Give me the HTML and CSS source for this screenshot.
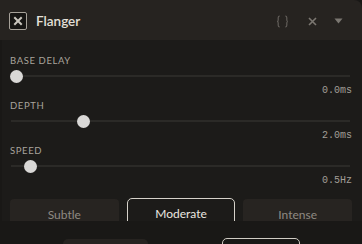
FILE: index.html
```html
<!DOCTYPE html>
<html>
<head>
<meta charset="utf-8">
<link rel="stylesheet" href="styles.css">
</head>
<body>
<div class="panel">
  <div class="header">
    <div class="close-btn">
      <svg width="10" height="10" viewBox="0 0 10 10"><path d="M2 2 L8 8 M8 2 L2 8" stroke="#c9c5bd" stroke-width="2" stroke-linecap="square"/></svg>
    </div>
    <div class="title">Flanger</div>
    <div class="spacer"></div>
    <svg class="ico braces" width="13" height="13" viewBox="0 0 13 13"><path d="M3.8 1 Q2.2 1 2.2 2.8 L2.2 5 Q2.2 6.5 1 6.5 Q2.2 6.5 2.2 8 L2.2 10.2 Q2.2 12 3.8 12 M9.2 1 Q10.8 1 10.8 2.8 L10.8 5 Q10.8 6.5 12 6.5 Q10.8 6.5 10.8 8 L10.8 10.2 Q10.8 12 9.2 12" stroke="#625e59" stroke-width="1.2" fill="none"/></svg>
    <svg class="ico x" width="9" height="9" viewBox="0 0 9 9"><path d="M1 1 L8 8 M8 1 L1 8" stroke="#7b7771" stroke-width="1.6"/></svg>
    <svg class="ico tri" width="9" height="6" viewBox="0 0 9 6"><path d="M0.5 0.5 L8.5 0.5 L4.5 5.5 Z" fill="#7b7771"/></svg>
  </div>
  <div class="content">
    <div class="param">
      <div class="label">BASE DELAY</div>
      <div class="slider"><div class="track"></div><div class="thumb" style="left:0%"></div></div>
      <div class="value">0.0ms</div>
    </div>
    <div class="param">
      <div class="label">DEPTH</div>
      <div class="slider"><div class="track"></div><div class="thumb" style="left:19.6%"></div></div>
      <div class="value">2.0ms</div>
    </div>
    <div class="param">
      <div class="label">SPEED</div>
      <div class="slider"><div class="track"></div><div class="thumb" style="left:4.1%"></div></div>
      <div class="value">0.5Hz</div>
    </div>
    <div class="presets">
      <div class="preset">Subtle</div>
      <div class="preset active">Moderate</div>
      <div class="preset">Intense</div>
    </div>
  </div>
</div>
<div class="footer">
  <div class="fbtn dark"></div>
  <div class="fbtn outline"></div>
</div>
</body>
</html>
```
FILE: styles.css
```css
html, body {
  margin: 0;
  padding: 0;
}
body {
  width: 362px;
  height: 244px;
  overflow: hidden;
  background: #191816;
  font-family: Lato, "Noto Sans", sans-serif;
}
.panel {
  display: flex;
  flex-direction: column;
}
.header {
  height: 40px;
  background: #262320;
  border-top-right-radius: 8px;
  display: flex;
  align-items: center;
  padding: 0 19px 0 9px;
  box-sizing: border-box;
}
.close-btn {
  width: 18px;
  height: 18px;
  box-sizing: border-box;
  border: 1px solid #a6a199;
  border-radius: 2px;
  background: #161513;
  display: flex;
  align-items: center;
  justify-content: center;
  margin-top: 1px;
}
.title {
  margin-left: 9px;
  font-size: 13.5px;
  font-weight: 600;
  color: #e4e0d9;
  margin-top: 1px;
}
.spacer { flex: 1; }
.ico { display: block; margin-top: 2px; }
.braces { margin-right: 19px; }
.x { margin-right: 17px; }
.tri { margin-top: 1px; }
.content {
  height: 181px;
  overflow: hidden;
  background: #1c1b19;
  margin-left: 2px;
  padding: 15px 10px 0 8px;
  box-sizing: border-box;
  display: flex;
  flex-direction: column;
  gap: 3px;
}
.param {
  display: flex;
  flex-direction: column;
  gap: 3px;
}
.label {
  height: 12px;
  line-height: 12px;
  font-size: 9.5px;
  letter-spacing: 0.6px;
  color: #a9a49c;
}
.slider {
  position: relative;
  height: 12px;
  margin-right: 2px;
}
.track {
  position: relative;
  top: 5px;
  height: 2px;
  background: #2b2a27;
  margin-left: 1px;
}
.thumb {
  position: absolute;
  top: 0;
  width: 13px;
  height: 13px;
  margin-top: -0.5px;
  border-radius: 50%;
  background: #d9d8d6;
}
.value {
  height: 12px;
  line-height: 12px;
  text-align: right;
  font-family: "Liberation Mono", monospace;
  font-size: 10px;
  color: #a29e97;
}
.presets {
  margin-top: 9px;
  display: grid;
  grid-template-columns: 1fr 1fr 1fr;
  gap: 8px;
}
.preset {
  height: 34px;
  box-sizing: border-box;
  border-radius: 4px;
  background: #272421;
  color: #8f8a83;
  font-size: 12px;
  line-height: 14px;
  display: flex;
  justify-content: center;
  padding-top: 9px;
}
.preset.active {
  background: transparent;
  border: 1px solid #d6d2ca;
  border-radius: 5px;
  color: #ebe7e0;
  padding-top: 8px;
  margin-top: -1px;
  height: 35px;
}
.footer {
  display: flex;
  padding: 17px 0 0 63px;
  gap: 74px;
}
.fbtn {
  height: 30px;
  border-radius: 5px;
  box-sizing: border-box;
}
.fbtn.dark {
  width: 85px;
  margin-top: 1px;
  background: #262320;
}
.fbtn.outline {
  width: 78px;
  border: 1px solid #d0ccc4;
}
```
